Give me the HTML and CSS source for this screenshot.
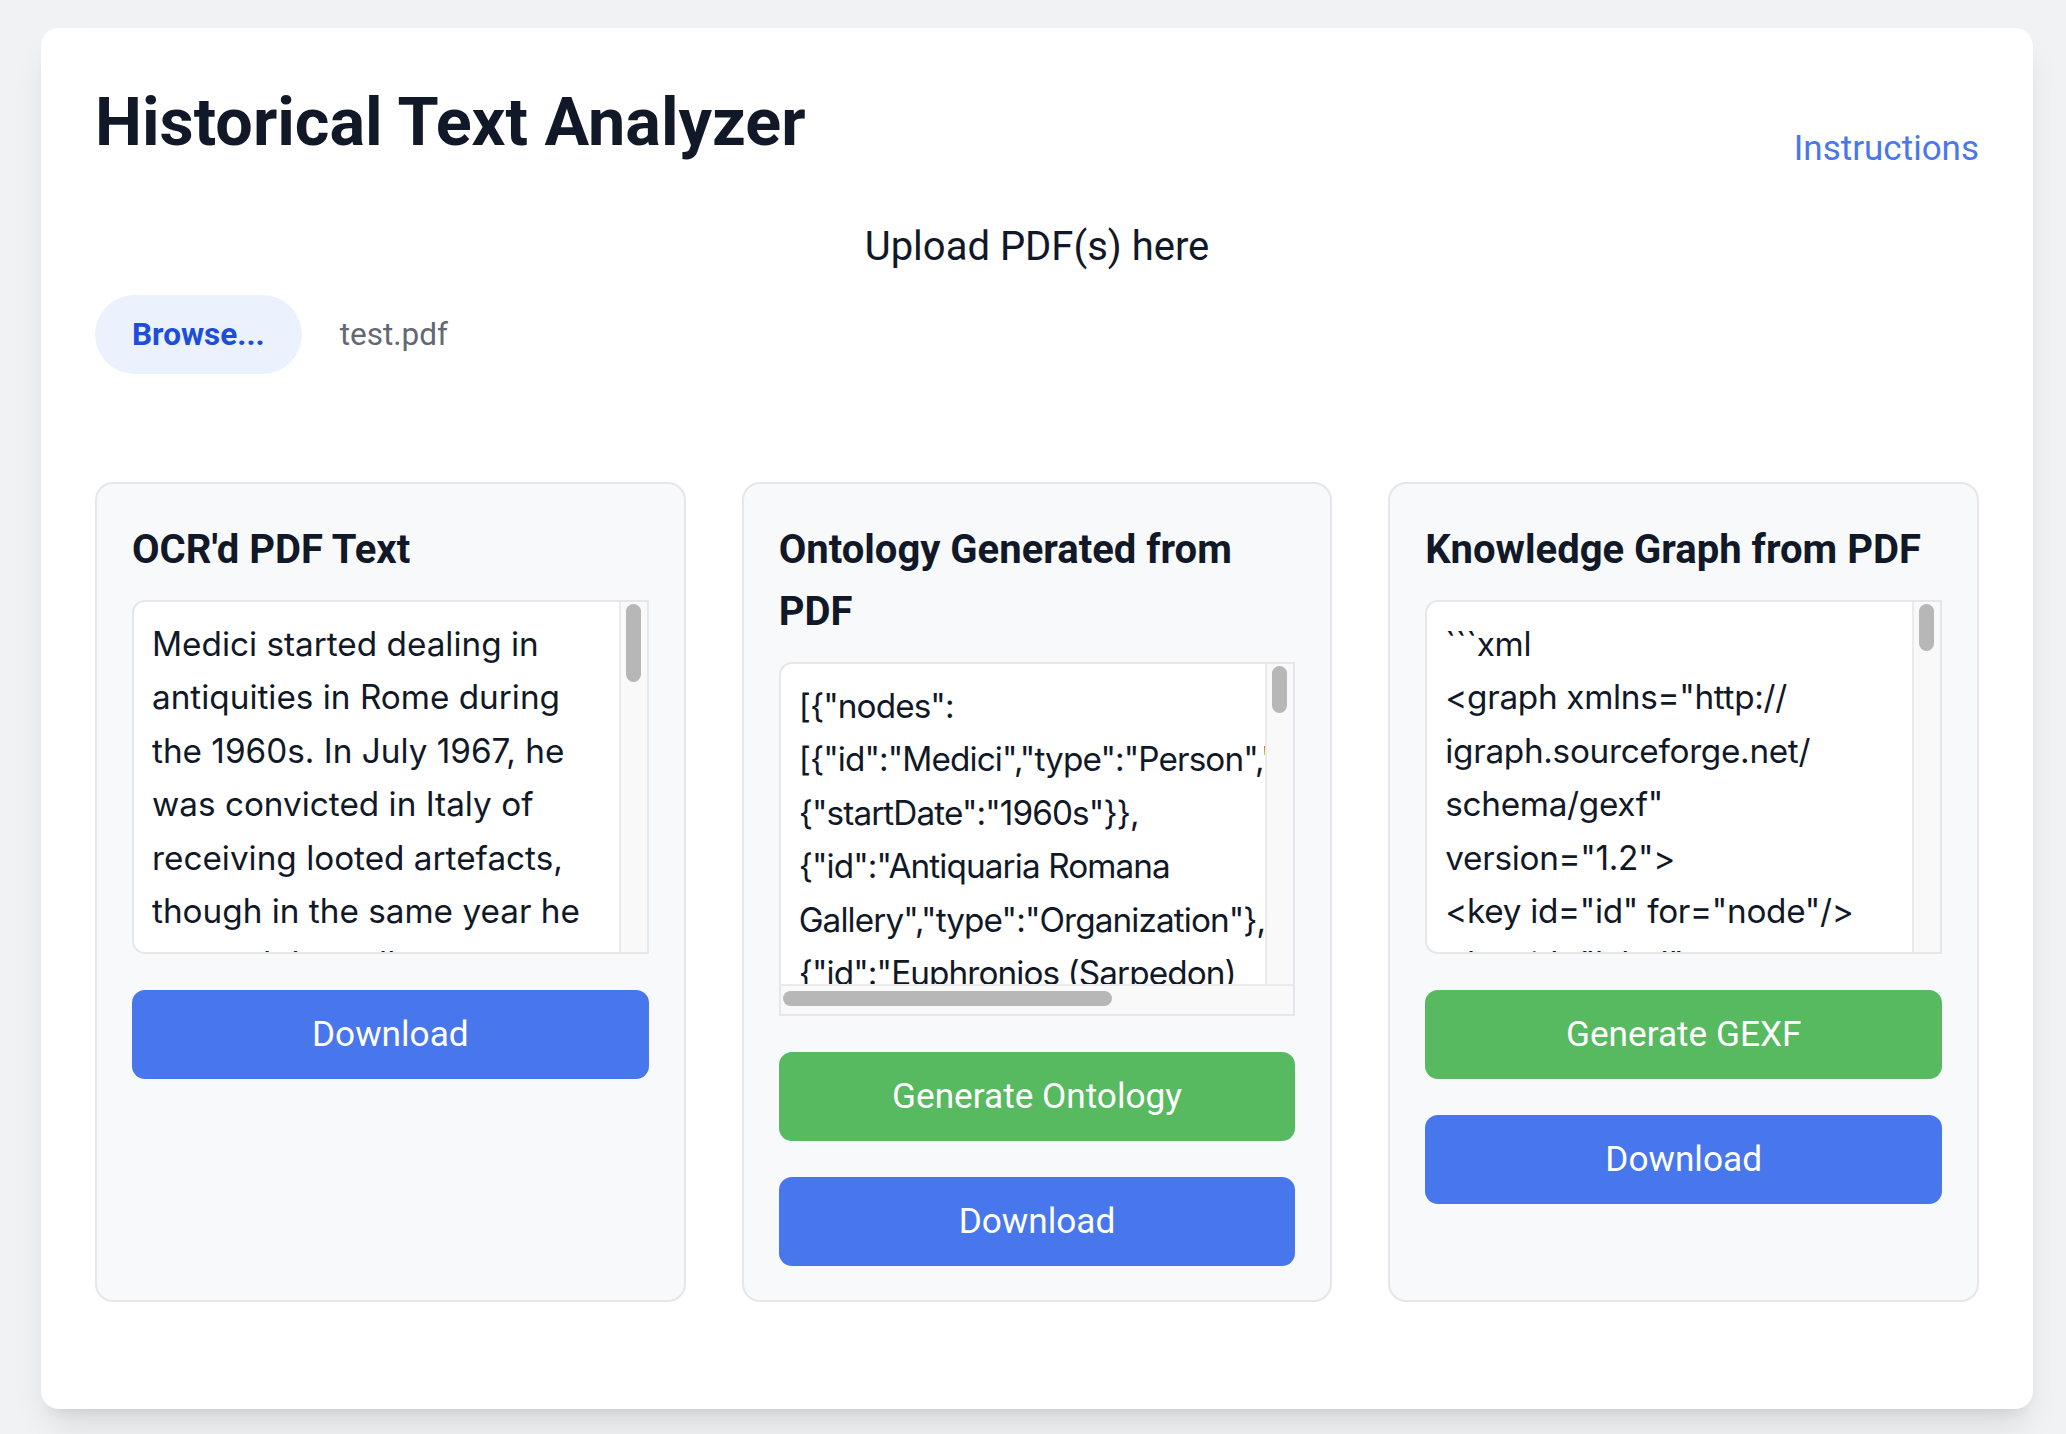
FILE: index.html
```html
<!DOCTYPE html>
<html lang="en">
<head>
<meta charset="utf-8">
<title>Historical Text Analyzer</title>
<link rel="stylesheet" href="styles.css">
</head>
<body>
<main class="card">
  <header class="header">
    <h1 class="title">Historical Text Analyzer</h1>
    <a class="instructions" href="#">Instructions</a>
  </header>

  <section class="upload">
    <label class="upload-label" for="pdf">Upload PDF(s) here</label>
    <div class="file-row">
      <button class="browse" id="pdf" type="button">Browse...</button>
      <span class="filename">test.pdf</span>
    </div>
  </section>

  <section class="panels">
    <div class="panel">
      <h2 class="panel-title">OCR'd PDF Text</h2>
      <div class="textbox">
        <div class="textbox-text">Medici started dealing in antiquities in Rome during the 1960s. In July 1967, he was convicted in Italy of receiving looted artefacts, though in the same year he opened the gallery Antiquaria Romana in Rome. He began to supply antiquities to the American dealer Robert Hecht and, through him, to museums in the United States. In 1968 Medici moved part of his business to Geneva, Switzerland, where he acquired storage space in the Freeport. In December 1972 he bought the Euphronios (Sarpedon) krater from tombaroli who had illegally excavated it from an Etruscan tomb near Cerveteri.</div>
        <div class="vbar"><div class="vthumb vthumb-long"></div></div>
      </div>
      <div class="actions">
        <button class="btn btn-blue" type="button">Download</button>
      </div>
    </div>

    <div class="panel">
      <h2 class="panel-title">Ontology Generated from PDF</h2>
      <div class="textbox textbox-json">
        <div class="textbox-text textbox-text-json">[{"nodes": [{"id":"Medici","type":"Person","properties": {"startDate":"1960s"}}, {"id":"Antiquaria Romana Gallery","type":"Organization"}, {"id":"Euphronios&nbsp;(Sarpedon) krater","type":"Artifact"}, {"id":"Robert Hecht","type":"Person"}, {"id":"Metropolitan Museum of Art","type":"Organization"}, {"id":"Rome","type":"Location"}, {"id":"Geneva Freeport","type":"Location"}], "edges": [{"source":"Medici","target":"Antiquaria Romana Gallery","relation":"opened"}, {"source":"Medici","target":"Euphronios (Sarpedon) krater","relation":"bought"}]}]</div>
        <div class="vbar"><div class="vthumb vthumb-short"></div></div>
        <div class="hbar"><div class="hthumb"></div></div>
        <div class="corner"></div>
      </div>
      <div class="actions">
        <button class="btn btn-green" type="button">Generate Ontology</button>
        <button class="btn btn-blue" type="button">Download</button>
      </div>
    </div>

    <div class="panel">
      <h2 class="panel-title">Knowledge Graph from PDF</h2>
      <div class="textbox">
        <div class="textbox-text textbox-text-code">```xml
&lt;graph xmlns="http://<wbr>igraph.sourceforge.net/<wbr>schema/gexf"
version="1.2"&gt;
&lt;key id="id" for="node"/&gt;
&lt;key id="label" for="node"/&gt;
&lt;key id="type" for="node"/&gt;
&lt;nodes&gt;
&lt;node id="Medici" label="Medici"/&gt;
&lt;/nodes&gt;
&lt;/graph&gt;
```</div>
        <div class="vbar"><div class="vthumb vthumb-short"></div></div>
      </div>
      <div class="actions">
        <button class="btn btn-green" type="button">Generate GEXF</button>
        <button class="btn btn-blue" type="button">Download</button>
      </div>
    </div>
  </section>
</main>
</body>
</html>
```

FILE: styles.css
```css
* { box-sizing: border-box; }

html, body {
  margin: 0;
}

body {
  background: #f1f2f4;
  padding: 28px 33px 25px 41px;
  font-family: Roboto, "Liberation Sans", sans-serif;
  color: #111827;
}

.card {
  background: #ffffff;
  border-radius: 18px;
  padding: 54px 54px 107px;
  box-shadow: 0 22px 34px -7px rgba(0, 0, 0, 0.1), 0 9px 14px -9px rgba(0, 0, 0, 0.1);
}

/* header */
.header {
  display: flex;
  justify-content: space-between;
  align-items: flex-start;
}

.title {
  margin: 0;
  font-size: 66.5px;
  line-height: 81px;
  font-weight: 700;
  color: #111827;
}

.instructions {
  margin-top: 40px;
  font-size: 35px;
  line-height: 54px;
  color: #4a78e8;
  text-decoration: none;
}

/* upload */
.upload {
  margin-top: 39px;
}

.upload-label {
  display: block;
  text-align: center;
  font-size: 40px;
  line-height: 63px;
  margin-bottom: 17px;
  color: #111827;
}

.file-row {
  display: flex;
  align-items: center;
  gap: 38px;
}

.browse {
  border: 0;
  border-radius: 9999px;
  background: #ebf2fd;
  color: #1d4ed8;
  font-family: inherit;
  font-size: 31.5px;
  line-height: 45px;
  font-weight: 700;
  padding: 17px 37px;
}

.filename {
  font-size: 31.5px;
  line-height: 45px;
  color: #646873;
}

/* panels */
.panels {
  margin-top: 108px;
  display: grid;
  grid-template-columns: repeat(3, minmax(0, 1fr));
  gap: 56px;
}

.panel {
  min-width: 0;
  background: #f8f9fa;
  border: 2px solid #e5e7eb;
  border-radius: 18px;
  padding: 35px 35px 34px;
  display: flex;
  flex-direction: column;
}

.panel-title {
  margin: 0 0 19px;
  font-size: 40px;
  line-height: 62px;
  font-weight: 700;
  color: #111827;
}

/* text boxes with their scroll bars */
.textbox {
  display: grid;
  grid-template-columns: minmax(0, 1fr) 28px;
  grid-template-rows: minmax(0, 1fr);
  height: 354px;
  background: #ffffff;
  border: 2px solid #e5e7eb;
  border-radius: 13px 0 0 13px;
  overflow: hidden;
  margin-bottom: 36px;
}

.textbox-json {
  grid-template-rows: minmax(0, 1fr) 30px;
  border-radius: 13px 0 0 0;
}

.textbox-text {
  overflow: hidden;
  padding: 16px 18px;
  font-family: Inter, Roboto, sans-serif;
  font-size: 33.3px;
  line-height: 53.4px;
  color: #111827;
}

.textbox-text-json {
  padding-right: 0;
  letter-spacing: -0.9px;
}

.textbox-text-code {
  white-space: pre-wrap;
  letter-spacing: -0.3px;
}

.vbar {
  background: #f9f9f9;
  border-left: 2px solid #ebebeb;
  padding: 2px 0 0 5px;
}

.vthumb {
  width: 15px;
  border-radius: 8px;
  background: #b7b7b7;
}

.vthumb-long {
  height: 78px;
}

.vthumb-short {
  height: 47px;
}

.hbar {
  background: #f9f9f9;
  border-top: 2px solid #ebebeb;
  padding: 5px 0 0 2px;
}

.hthumb {
  width: 329px;
  height: 15px;
  border-radius: 8px;
  background: #b7b7b7;
}

.corner {
  background: #f9f9f9;
  border-top: 2px solid #ebebeb;
}

/* buttons */
.actions {
  display: flex;
  flex-direction: column;
  gap: 36px;
}

.btn {
  width: 100%;
  border: 0;
  border-radius: 13px;
  padding: 17px;
  font-family: inherit;
  font-size: 35.2px;
  line-height: 55px;
  color: #ffffff;
}

.btn-blue {
  background: #4876ec;
}

.btn-green {
  background: #57b960;
}
```
